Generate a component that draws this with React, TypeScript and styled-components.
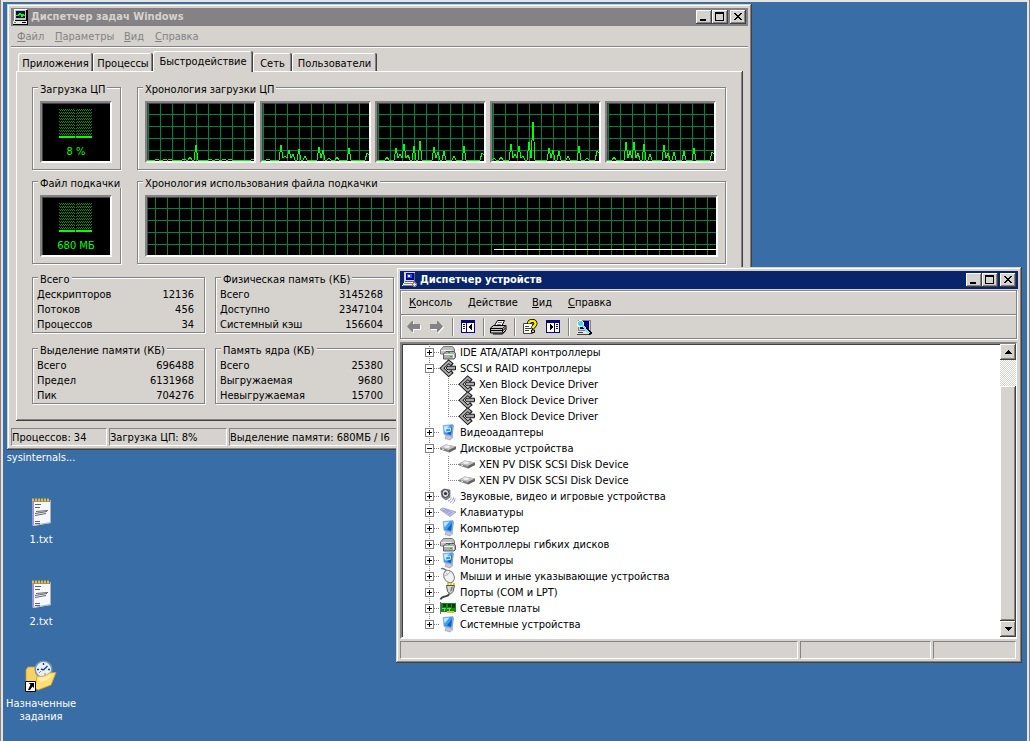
import React, { useState } from "react";
import styled, { createGlobalStyle, css } from "styled-components";

const c = {
  face: "#d6d3ce",
  light: "#ffffff",
  shadow: "#848284",
  dark: "#424142",
  navy: "#08246b",
  desktop: "#396da5",
  green: "#00ff00",
  grid: "#008242",
};

const GlobalStyle = createGlobalStyle`
  * { box-sizing: border-box; }
  body {
    margin: 0;
    font: 11px/13px "DejaVu Sans Condensed", "DejaVu Sans", sans-serif;
    color: #000;
    background: ${c.desktop};
  }
  button { font: inherit; color: inherit; padding: 0; border: 0; background: none; }
  h2, ul, p { margin: 0; padding: 0; list-style: none; }
  svg { display: block; flex: none; }
`;

const raised = css`
  background: ${c.face};
  box-shadow: inset -1px -1px ${c.dark}, inset 1px 1px ${c.light},
    inset -2px -2px ${c.shadow};
`;

const sunken = css`
  border: 2px solid;
  border-color: ${c.shadow} ${c.light} ${c.light} ${c.shadow};
  box-shadow: inset 1px 1px ${c.dark};
`;

/* ---------- desktop ---------- */

const Frame = styled.div`
  display: flex;
  min-height: 100vh;
  border: solid #8c827b;
  border-width: 0 1px;
`;

const Desktop = styled.main`
  position: relative;
  flex: 1;
  overflow: hidden;
  background: ${c.desktop};
  border: solid #e7e3de;
  border-width: 2px 2px 1px;
`;

const IconColumn = styled.div`
  display: flex;
  flex-direction: column;
  width: 76px;
  padding-top: 412px;
`;

const Shortcut = styled.button`
  display: flex;
  flex-direction: column;
  align-items: center;
  gap: 5px;
  height: 82px;
  color: #fff;
`;

const IconSlot = styled.span`
  display: block;
  width: 32px;
  height: 32px;
`;

/* ---------- windows ---------- */

const Window = styled.section<{ $x: number; $y: number; $w: number }>`
  position: absolute;
  left: ${(p) => p.$x}px;
  top: ${(p) => p.$y}px;
  width: ${(p) => p.$w}px;
  display: flex;
  flex-direction: column;
  padding: 4px;
  background: ${c.face};
  box-shadow: inset -1px -1px ${c.dark}, inset 1px 1px ${c.face},
    inset -2px -2px ${c.shadow}, inset 2px 2px ${c.light};
`;

const TitleBar = styled.header<{ $active?: boolean }>`
  display: flex;
  align-items: center;
  height: 18px;
  padding: 0 2px;
  background: ${(p) => (p.$active ? c.navy : c.shadow)};
  color: ${(p) => (p.$active ? c.light : c.face)};
`;

const Title = styled.h2`
  flex: 1;
  padding-left: 2px;
  font: bold 11px/14px "DejaVu Sans Condensed", sans-serif;
  white-space: nowrap;
`;

const CaptionButton = styled.button<{ $gap?: boolean }>`
  ${raised}
  width: 16px;
  height: 14px;
  margin-left: ${(p) => (p.$gap ? 2 : 0)}px;
`;

const MenuBar = styled.nav<{ $dim?: boolean }>`
  display: flex;
  align-items: center;
  height: ${(p) => (p.$dim ? 20 : 23)}px;
  padding-left: ${(p) => (p.$dim ? 6 : 0)}px;
  color: ${(p) => (p.$dim ? c.shadow : "#000")};
`;

const MenuItem = styled.button<{ $w: number }>`
  width: ${(p) => p.$w}px;
  height: 17px;
  text-align: left;
  white-space: nowrap;
`;

const Divider = styled.div`
  height: 2px;
  background: ${c.shadow};
  border-bottom: 1px solid ${c.light};
`;

const StatusBar = styled.footer<{ $columns: string; $inset?: boolean }>`
  display: grid;
  grid-template-columns: ${(p) => p.$columns};
  gap: 2px;
  height: 18px;
  margin-right: ${(p) => (p.$inset ? 2 : 0)}px;
`;

const StatusCell = styled.span`
  border: 1px solid;
  border-color: ${c.shadow} ${c.light} ${c.light} ${c.shadow};
  line-height: 17px;
  white-space: nowrap;
  overflow: hidden;
`;

/* ---------- task manager ---------- */

const TabArea = styled.div`
  padding: 3px 5px 7px;
`;

const TabList = styled.div`
  display: flex;
  align-items: flex-end;
  height: 20px;
  padding-left: 2px;
`;

const Tab = styled.button<{ $w: number; $active?: boolean }>`
  position: relative;
  width: ${(p) => p.$w}px;
  height: ${(p) => (p.$active ? 21 : 18)}px;
  margin-bottom: ${(p) => (p.$active ? -1 : 0)}px;
  padding-top: ${(p) => (p.$active ? 0 : 2)}px;
  z-index: ${(p) => (p.$active ? 1 : 0)};
  background: ${c.face};
  border-radius: 2px 2px 0 0;
  box-shadow: inset -1px 0 ${c.dark}, inset 1px 1px ${c.light}, inset -2px 0 ${c.shadow};
  white-space: nowrap;
`;

const TabPanel = styled.div`
  display: flex;
  flex-direction: column;
  padding: 10px 17px 17px 16px;
  box-shadow: inset -1px -1px ${c.dark}, inset 1px 1px ${c.light},
    inset -2px -2px ${c.shadow};
`;

const Columns = styled.div<{ $below: number }>`
  display: grid;
  grid-template-columns: 89px 1fr;
  gap: 16px;
  margin-bottom: ${(p) => p.$below}px;
`;

const MemoryGrid = styled.div`
  display: grid;
  grid-template-columns: 173px 179px;
  gap: 9px 10px;
`;

const Group = styled.fieldset<{ $table?: boolean }>`
  min-width: 0;
  margin: 0;
  padding: ${(p) => (p.$table ? "3px 10px 0 4px" : "7px 7px 6px")};
  border: 1px solid ${c.shadow};
  box-shadow: 1px 1px ${c.light}, inset 1px 1px ${c.light};
`;

const Legend = styled.legend<{ $table?: boolean }>`
  margin-left: ${(p) => (p.$table ? 1 : -2)}px;
  padding: 0 2px;
  height: 13px;
  line-height: 17px;
  background: ${c.face};
  white-space: nowrap;
`;

const Gauge = styled.div`
  ${sunken}
  display: flex;
  flex-direction: column;
  align-items: center;
  justify-content: space-between;
  width: 72px;
  height: 62px;
  padding: 6px 0 3px;
  background: #000;
  color: ${c.green};
`;

const ChartRow = styled.div<{ $inset?: boolean }>`
  display: flex;
  gap: 4px;
  padding-right: ${(p) => (p.$inset ? 2 : 0)}px;
`;

const Screen = styled.div`
  ${sunken}
  flex: 1;
  height: 62px;
  min-width: 0;
  background: #000;
`;

const Figures = styled.table`
  width: 100%;
  border-spacing: 0;
  th,
  td {
    padding: 0;
    height: 15px;
    font-weight: normal;
    text-align: left;
    white-space: nowrap;
  }
  td {
    text-align: right;
  }
`;

/* ---------- device manager ---------- */

const Bars = styled.div`
  margin: 1px 1px 3px 0;
  border: 1px solid ${c.shadow};
  box-shadow: 1px 1px ${c.light}, inset 1px 1px ${c.light};
`;

const ToolBar = styled.div`
  display: flex;
  align-items: center;
  height: 23px;
  padding-left: 1px;
  box-shadow: inset 0 1px ${c.light};
`;

const ToolButton = styled.button`
  display: flex;
  align-items: center;
  justify-content: center;
  width: 23px;
  height: 23px;
`;

const ToolSeparator = styled.span`
  width: 2px;
  height: 18px;
  margin: 0 2px 0 4px;
  background: ${c.shadow};
  border-right: 1px solid ${c.light};
`;

const MenuRow = styled.div`
  padding-left: 8px;
  border-bottom: 1px solid ${c.shadow};
`;

const TreeBox = styled.div`
  display: flex;
  margin: 0 1px 2px 0;
  border: 2px solid;
  border-color: ${c.shadow} ${c.light} ${c.light} ${c.shadow};
  border-width: 2px 1px 2px 2px;
  box-shadow: inset 1px 1px ${c.dark};
  background: #fff;
`;

const Branch = styled.ul<{ $line: number }>`
  flex: 1;
  background: linear-gradient(${c.shadow} 50%, transparent 50%) ${(p) => p.$line}px 0 / 1px 2px repeat-y;
  > li:last-child {
    background: linear-gradient(#fff, #fff) ${(p) => p.$line}px 100% / 1px 8px no-repeat;
  }
`;

const TreePane = styled.div`
  flex: 1;
  padding-bottom: 5px;
`;

const TreeRow = styled.div<{ $child?: boolean }>`
  display: flex;
  align-items: center;
  height: 16px;
  padding-left: ${(p) => (p.$child ? 46 : 23)}px;
  white-space: nowrap;
`;

const Dots = styled.span<{ $w: number }>`
  width: ${(p) => p.$w}px;
  height: 1px;
  background: linear-gradient(90deg, ${c.shadow} 50%, transparent 50%) 0 0 / 2px 1px;
`;

const Expander = styled.button`
  width: 9px;
  height: 9px;
  background: #fff;
`;

const TreeLabel = styled.span`
  padding-left: 4px;
`;

const ScrollBar = styled.div`
  display: flex;
  flex-direction: column;
  width: 16px;
  background: repeating-conic-gradient(${c.face} 0 25%, #fff 0 50%) 0 0 / 2px 2px;
`;

const ScrollArrow = styled.button`
  ${raised}
  display: flex;
  align-items: center;
  justify-content: center;
  height: 16px;
`;

const ScrollThumb = styled.div`
  ${raised}
  flex: 1;
  margin-top: 26px;
`;

/* ---------- icons ---------- */

const Px = ({ w = 16, h = 16, children }: { w?: number; h?: number; children: React.ReactNode }) => (
  <svg width={w} height={h} viewBox={`0 0 ${w} ${h}`} shapeRendering="crispEdges" aria-hidden="true">
    {children}
  </svg>
);

const TaskManagerIcon = () => (
  <Px>
    <path d="M1 0h13v12h-13z" fill="#fff" />
    <path d="M13 1h2v11H2v-1h11z" fill="#000" />
    <path d="M2 1h11v10H2z" fill="#c6c3c6" />
    <path d="M3 2h9v7H3z" fill="#001040" />
    <path d="M3 6h2V5h1V4h1v1h1v2h1V5h1v1h2" stroke="#00ff00" fill="none" />
    <path d="M0 12h14v3H0z" fill="#e7e7e7" />
    <path d="M1 13h2v1H1z" fill="#00c000" />
    <path d="M9 13h4v1H9zM14 12h1v3h-1zM0 15h15v1H0z" fill="#000" />
  </Px>
);

const DeviceManagerIcon = () => (
  <Px>
    <path d="M2 0h11v10H2z" fill="#d6d3ce" />
    <path d="M4 1h8v7H4z" fill="#0000a0" />
    <path d="M5 2h5v4H5z" fill="#2058f7" />
    <path d="M6 3h2v2H6z" fill="#fff" />
    <path d="M12 1h1v9H3V9h9z" fill="#63656b" />
    <path d="M2 10h10l2 4H0z" fill="#f7f7f7" />
    <path d="M2 11h9v1H2zM1 13h9v1H1z" fill="#848284" />
    <path d="M11 10h3v1h1v3h-1v1h-3v-1h-1v-3h1z" fill="#848284" />
    <path d="M12 11h1v1h1v1h-1v1h-1v-1h-1v-1h1z" fill="#e7e7e7" />
  </Px>
);

const MinimizeGlyph = () => <Px h={14}><path d="M4 9h6v2H4z" /></Px>;
const MaximizeGlyph = () => <Px h={14}><path fillRule="evenodd" d="M3 2h9v9H3zM4 4v6h7V4z" /></Px>;
const CloseGlyph = () => (
  <Px h={14}>
    <path d="M4 3h2v1h1v1h2V4h1V3h2v1h-1v1h-1v1H9v1h1v1h1v1h1v1h-2V9H9V8H7v1H6v1H4V9h1V8h1V7h1V6H6V5H5V4H4z" />
  </Px>
);

const ArrowIcon = ({ right }: { right?: boolean }) => {
  const shape = right ? "M0 4h7V1h1l5 5.500-5 5.500H7V9H0z" : "M13 4H6V1H5L0 6.500 5 12h1V9h7z";
  return (
    <svg width="14" height="13" viewBox="0 0 14 13" overflow="visible" aria-hidden="true">
      <path d={shape} fill="#fff" transform="translate(1 1)" />
      <path d={shape} fill="#848284" />
    </svg>
  );
};

const PaneIcon = ({ right }: { right?: boolean }) => (
  <Px w={14} h={13}>
    <path d="M0 0h14v13H0z" fill="#08087b" />
    <path d={right ? "M1 3h7v9H1zM9 3h4v9H9z" : "M1 3h4v9H1zM6 3h7v9H6z"} fill="#fff" />
    <path d={right ? "M10 4h2v1h-2zM10 6h2v1h-2zM10 8h2v1h-2z" : "M2 4h2v1H2zM2 6h2v1H2zM2 8h2v1H2z"} fill="#08087b" />
    <path d={right ? "M4 4h1v1h1v1h1v2H6v1H5v1H4z" : "M11 4h-1v1H9v1H8v2h1v1h1v1h1z"} fill="#000" />
  </Px>
);

const PrinterIcon = () => (
  <svg width="17" height="16" viewBox="0 0 17 16" aria-hidden="true">
    <path d="M4.500 6.500L7.500 1.500h7l-2.500 5z" fill="#fff" stroke="#000" />
    <path d="M8 3.500h4M7 5.500h4" stroke="#848284" />
    <path d="M.5 9l3-2.500h12.500v4.500l-3 3H.5z" fill="#c6c3c6" stroke="#000" />
    <path d="M.5 9.500h12l3.500-3M12.500 9.500v4M1 11.500h11M12.500 12l3-3" fill="none" stroke="#000" />
    <path d="M3 15h9.500l3-3" fill="none" stroke="#000" />
    <path d="M9 10.500h2" stroke="#e0d000" />
  </svg>
);

const HelpIcon = () => (
  <svg width="16" height="16" viewBox="0 0 16 16" aria-hidden="true">
    <path d="M1.500 4.500h9v10h-9z" fill="#fff" stroke="#424142" />
    <path d="M3 7.500h4M3 9.500h6M3 11.500h4" stroke="#424142" />
    <path d="M7 5C7 1 13.500 1 13.500 4.500 13.500 7 11 6.500 11 9.500" fill="none" stroke="#000" strokeWidth="4" />
    <path d="M7 4.500C7 1 13.500 1 13.500 4.500 13.500 7 11 6.500 11 9" fill="none" stroke="#ffef00" strokeWidth="2.400" />
    <path d="M9.500 11h3v2.500h-3z" fill="#ffef00" stroke="#000" />
  </svg>
);

const ScanIcon = () => (
  <Px>
    <path d="M2 1h12v10H2z" fill="#d6d3ce" stroke="#848284" />
    <path d="M4 2h9v8H4z" fill="#000090" />
    <path d="M1 12h13v3H1z" fill="#e7e3de" />
    <path d="M14 12h1v4H1v-1h13zM2 13h5v1H2z" fill="#424142" />
    <circle cx="4.500" cy="4.500" r="3" fill="#4ad6e7" stroke="#fff" />
    <path d="M7 6l8 9" stroke="#000" strokeWidth="3" />
    <path d="M6 6l7 8" stroke="#7be7f7" strokeWidth="2" />
  </Px>
);

const ControllerIcon = () => (
  <svg width="16" height="16" viewBox="0 0 16 16" aria-hidden="true">
    <path d="M.5 6L3.500 2.500h9L14.500 5v4l-3 1H.5z" fill="#c0c0c0" stroke="#7b7b7b" />
    <path d="M1 6.500h10.500V10" fill="none" stroke="#efefef" />
    <path d="M3.500 10l2.500-2.500h8L15.500 9.500v4L14 15H3.500z" fill="#adadad" stroke="#5a5a5a" />
    <path d="M4 10.500h9.500V14" fill="none" stroke="#efefef" />
    <path d="M8 8h2v1H8zM10 12h2v1h-2z" fill="#10b020" />
  </svg>
);

const ScsiIcon = () => (
  <svg width="16" height="16" viewBox="0 0 16 16" overflow="visible" aria-hidden="true">
    <path d="M12.500 5L8.700 1.800 2 8.200l6.700 6.400L12.500 11.500" fill="none" stroke="#181818" strokeWidth="3.800" />
    <path d="M11.500 4.200L8.700 1.800 2 8.200l6.700 6.400 2.800-2.400" fill="none" stroke="#adadad" strokeWidth="1.900" />
    <path d="M6.500 7.200l1.500-1h7.500v3.600H8l-1.500-1z" fill="#a5a5a5" stroke="#181818" />
  </svg>
);

const MonitorIcon = ({ card }: { card?: boolean }) => (
  <svg width="16" height="16" viewBox="0 0 16 16" overflow="visible" aria-hidden="true">
    <path d="M6 11h5l2 2.500-3 2.500-5-1.500z" fill="#c6c6d6" stroke="#9494ad" strokeWidth=".6" />
    <path d="M12.500 1l1.500.5-1.500 11-2 .5z" fill="#9c9cb5" />
    <path d="M3 1.500L13 .5l-1.500 11.500L4 10.500z" fill="#3c9cef" stroke="#94add6" strokeWidth=".7" />
    <path d="M3.600 2.200l6-.6-5 6z" fill="#b5e7ff" />
    <path d="M7 9.500L12 3l-1 8z" fill="#1060ce" />
    {card && <path d="M5 4.500l5.500-.5-.3 3.500-4.700.5z" fill="none" stroke="#d6efff" />}
  </svg>
);

const DiskIcon = () => (
  <svg width="16" height="16" viewBox="0 0 16 16" aria-hidden="true">
    <path d="M0 7.500L6 4.500l10 2v2.500l-7 3.500L0 9.500z" fill="#848484" />
    <path d="M0 7.500L6 4.500l10 2-7 3.500z" fill="#c2c2c2" />
    <ellipse cx="7" cy="6.800" rx="3" ry="1.300" fill="#efefef" />
    <path d="M9 10l7-3.500v2.500l-7 3.500z" fill="#636363" />
    <path d="M2 9l2 .5" stroke="#dff5df" />
  </svg>
);

const SoundIcon = () => (
  <svg width="16" height="16" viewBox="0 0 16 16" aria-hidden="true">
    <path d="M1 3l3-2 6 1v7l-4 3-4-3z" fill="#8c8c94" stroke="#5a5a63" strokeWidth=".7" />
    <ellipse cx="5.500" cy="5.500" rx="3.500" ry="4" fill="#d6d6de" stroke="#42424a" />
    <circle cx="5.500" cy="5.500" r="1.600" fill="#31313a" />
    <path d="M8 13c2-.5 3-2 3.200-3.500M10 14.500c2-1 3.500-3 3.500-5M12.500 15.500c1.500-1 2.500-3 2.500-5" fill="none" stroke="#8c94e7" />
  </svg>
);

const KeyboardIcon = () => (
  <svg width="16" height="16" viewBox="0 0 16 16" aria-hidden="true">
    <path d="M0 5.500L3 4l13 4-6 4.500z" fill="#c6c6f0" stroke="#8484c6" strokeWidth=".7" />
    <path d="M2.500 6l8 4.500M4.500 5.300l8 3.700M6 9l3-3M9 10.500l3-3M3.500 7.500l3-2.500" stroke="#9494d0" strokeWidth=".8" />
  </svg>
);

const MouseIcon = () => (
  <svg width="16" height="16" viewBox="0 0 16 16" overflow="visible" aria-hidden="true">
    <path d="M1 1c3-2 4 2 6 1" fill="none" stroke="#737373" strokeWidth="1.400" />
    <ellipse cx="9" cy="8.500" rx="5" ry="6.500" transform="rotate(-28 9 8.500)" fill="#f2f2f2" stroke="#848484" />
    <path d="M4.500 7.500C6 8 9.500 6 10 3M6 4.500l2 2.500" fill="none" stroke="#9c9c9c" strokeWidth=".8" />
  </svg>
);

const PortIcon = () => (
  <svg width="16" height="16" viewBox="0 0 16 16" overflow="visible" aria-hidden="true">
    <path d="M9 9.500c0 4.500-7 1-8.500 6" fill="none" stroke="#424242" strokeWidth="1.800" />
    <path d="M6.500 1.500h8L13 7.500 10.500 10 7.500 7.500z" fill="#d6d6d6" stroke="#525252" />
    <path d="M11 3l2-.5-1 4-2 1.500z" fill="#848484" />
    <path d="M7 0h8" stroke="#e7ce00" strokeWidth="2" strokeDasharray="2 1" />
  </svg>
);

const NetworkIcon = () => (
  <Px>
    <path d="M1 3h15v9H1z" fill="#108a18" />
    <path d="M0 2h1v12H0z" fill="#6b6b6b" />
    <path d="M3 4h3v3H3zM8 4h3v3H8zM12 4h3v4h-3z" fill="#003c08" />
    <path d="M2 8h4v1H2zM7 8h4v1H7zM4 9h1v2H4zM9 9h1v2H9z" fill="#63d66b" />
    <path d="M7 11h7v2H7z" fill="#d6c631" />
  </Px>
);

const NotepadIcon = () => (
  <svg width="32" height="32" viewBox="0 0 32 32" aria-hidden="true">
    <path d="M7 4h18l1 23-18 3z" fill="#f4f8fa" />
    <path d="M7.500 4v25.500M8.500 4v25" stroke="#9c94d6" />
    <path d="M25.500 4v22.500l-17 3" fill="none" stroke="#a5b5bd" />
    <path d="M7 5h18" stroke="#8c7394" strokeWidth="2" />
    <path d="M7 4h18" stroke="#e7bd29" strokeWidth="3" strokeDasharray="2 1" />
    <path d="M10 8.500h6M10 11.500h5M11 15.500l12-1M10 17.500l12-2M10 19.500l11-2M10 25.500h5M10 27.500h5" stroke="#63636b" />
  </svg>
);

const ScheduledIcon = () => (
  <svg width="32" height="32" viewBox="0 0 32 32" aria-hidden="true">
    <path d="M1 10l2-3h7l2 3h12v14L14 29 1 27z" fill="#f7d363" stroke="#d69c29" strokeWidth=".8" />
    <circle cx="18.500" cy="9.500" r="8.300" fill="#e4f2fb" stroke="#7d95ad" strokeWidth="1.600" />
    <path d="M18.500 3v2M12 9.500h2M23 9.500h2M18.500 10l4-4M18.500 10l-2.500-1" stroke="#294263" strokeWidth="1.400" />
    <path d="M14 13l2-2M19 14h2" stroke="#e76339" />
    <path d="M10 28L12 16c5 1 9 0 12-3l7-.5L26 25l-13 5z" fill="#ffdf73" stroke="#d69c29" strokeWidth=".8" />
    <path d="M13 17c6 1 10 0 14-3-2 5-6 7-12 8" fill="#fff0b0" />
    <path d="M.5 21.500h10v10H.5z" fill="#fff" stroke="#000" />
    <path d="M4 23h5v5L7.500 26.500 5 30H3l2.500-5.200z" fill="#000" />
  </svg>
);

/* ---------- pieces ---------- */

const Caption = ({ title, icon, active }: { title: string; icon: React.ReactNode; active?: boolean }) => (
  <TitleBar $active={active}>
    {icon}
    <Title>{title}</Title>
    <CaptionButton aria-label="Свернуть"><MinimizeGlyph /></CaptionButton>
    <CaptionButton aria-label="Развернуть"><MaximizeGlyph /></CaptionButton>
    <CaptionButton aria-label="Закрыть" $gap><CloseGlyph /></CaptionButton>
  </TitleBar>
);

const Menu = ({ items, dim }: { items: [string, number][]; dim?: boolean }) => (
  <MenuBar $dim={dim}>
    {items.map(([text, w]) => (
      <MenuItem key={text} $w={w}>
        <u>{text[0]}</u>
        {text.slice(1)}
      </MenuItem>
    ))}
  </MenuBar>
);

const Meter = ({ id, value }: { id: string; value: string }) => (
  <Gauge>
    <Px w={34} h={29}>
      <defs>
        <pattern id={id} width="2" height="3" patternUnits="userSpaceOnUse">
          <path d="M0 0h1v1H0zM1 1h1v1H1z" fill="#009a00" />
        </pattern>
      </defs>
      <path d="M0 0h16v27H0zM17 0h16v27H17z" fill={`url(#${id})`} />
      <path d="M0 27h16v2H0zM17 27h16v2H17z" fill={c.green} />
    </Px>
    <span>{value}</span>
  </Gauge>
);

type Peak = [x: number, height: number];

const BASE = 57;

const trace = (peaks: Peak[]) => {
  const points: string[] = [`0,${BASE}`];
  let last = 0;
  peaks.forEach(([x, h], i) => {
    if (x - 2 > last) points.push(`${x - 2},${BASE}`);
    points.push(`${x},${BASE - h}`);
    const next = peaks[i + 1];
    last = x + 2;
    if (x < 104) points.push(`${last},${next && next[0] - x <= 4 ? BASE - 2 : BASE}`);
    else points.push(`${last},${BASE - h + 2}`);
  });
  return points.join(" ");
};

const Chart = ({ id, x, y, children }: { id: string; x: number; y: number; children: React.ReactNode }) => (
  <Screen>
    <svg width="100%" height="58" shapeRendering="crispEdges" aria-hidden="true">
      <defs>
        <pattern id={id} x={x} y={y} width="12" height="12" patternUnits="userSpaceOnUse">
          <path d="M0 0h12v1H1v11H0z" fill={c.grid} />
        </pattern>
      </defs>
      <rect width="100%" height="58" fill={`url(#${id})`} />
      {children}
    </svg>
  </Screen>
);

const cpuHistory: Peak[][] = [
  [[10, 1], [18, 1], [23, 1], [37, 1], [43, 3], [49, 15], [63, 1], [70, 1], [77, 1], [83, 1], [106, 1]],
  [[6, 1], [19, 15], [23, 4], [27, 10], [31, 6], [37, 11], [43, 4], [57, 13], [61, 10], [67, 2], [75, 3], [87, 12], [105, 7]],
  [[10, 3], [19, 12], [23, 6], [27, 16], [31, 5], [37, 14], [43, 19], [57, 13], [61, 8], [67, 9], [77, 4], [87, 14], [105, 7]],
  [[2, 2], [9, 3], [19, 16], [23, 6], [27, 14], [31, 4], [37, 18], [41, 38], [57, 12], [61, 10], [67, 9], [76, 4], [87, 14], [95, 2], [105, 9]],
  [[7, 3], [19, 18], [23, 9], [27, 18], [31, 7], [37, 16], [43, 6], [57, 15], [61, 7], [67, 8], [77, 9], [87, 12], [105, 8]],
];

const memory: { title: string; rows: [string, string][] }[] = [
  { title: "Всего", rows: [["Дескрипторов", "12136"], ["Потоков", "456"], ["Процессов", "34"]] },
  { title: "Физическая память (КБ)", rows: [["Всего", "3145268"], ["Доступно", "2347104"], ["Системный кэш", "156604"]] },
  { title: "Выделение памяти (КБ)", rows: [["Всего", "696488"], ["Предел", "6131968"], ["Пик", "704276"]] },
  { title: "Память ядра (КБ)", rows: [["Всего", "25380"], ["Выгружаемая", "9680"], ["Невыгружаемая", "15700"]] },
];

const TaskManager = () => (
  <Window $x={4} $y={2} $w={745}>
    <Caption title="Диспетчер задач Windows" icon={<TaskManagerIcon />} />
    <Menu dim items={[["Файл", 38], ["Параметры", 69], ["Вид", 31], ["Справка", 60]]} />
    <Divider />
    <TabArea>
      <TabList role="tablist">
        <Tab role="tab" $w={75}>Приложения</Tab>
        <Tab role="tab" $w={60}>Процессы</Tab>
        <Tab role="tab" $w={100} $active aria-selected>Быстродействие</Tab>
        <Tab role="tab" $w={39}>Сеть</Tab>
        <Tab role="tab" $w={85}>Пользователи</Tab>
      </TabList>
      <TabPanel role="tabpanel">
        <Columns $below={5}>
          <Group>
            <Legend>Загрузка ЦП</Legend>
            <Meter id="cpu" value="8 %" />
          </Group>
          <Group>
            <Legend>Хронология загрузки ЦП</Legend>
            <ChartRow $inset>
              {cpuHistory.map((peaks, i) => (
                <Chart key={i} id={`cpu-grid-${i}`} x={1} y={11}>
                  <polyline points={trace(peaks)} fill="none" stroke={c.green} />
                </Chart>
              ))}
            </ChartRow>
          </Group>
        </Columns>
        <Columns $below={7}>
          <Group>
            <Legend>Файл подкачки</Legend>
            <Meter id="page" value="680 МБ" />
          </Group>
          <Group>
            <Legend>Хронология использования файла подкачки</Legend>
            <ChartRow>
              <Chart id="page-grid" x={8} y={11}>
                <rect x="347" y="52" width="100%" height="1" fill="#e7ffe7" />
              </Chart>
            </ChartRow>
          </Group>
        </Columns>
        <MemoryGrid>
          {memory.map((group) => (
            <Group key={group.title} $table>
              <Legend $table>{group.title}</Legend>
              <Figures>
                <tbody>
                  {group.rows.map(([name, value]) => (
                    <tr key={name}>
                      <th scope="row">{name}</th>
                      <td>{value}</td>
                    </tr>
                  ))}
                </tbody>
              </Figures>
            </Group>
          ))}
        </MemoryGrid>
      </TabPanel>
    </TabArea>
    <StatusBar $columns="96px 118px 1fr">
      <StatusCell>Процессов: 34</StatusCell>
      <StatusCell>Загрузка ЦП: 8%</StatusCell>
      <StatusCell>Выделение памяти: 680МБ / I6</StatusCell>
    </StatusBar>
  </Window>
);

type Device = { name: string; icon: React.ReactNode; children?: string[] };

const devices: Device[] = [
  { name: "IDE ATA/ATAPI контроллеры", icon: <ControllerIcon /> },
  {
    name: "SCSI и RAID контроллеры",
    icon: <ScsiIcon />,
    children: ["Xen Block Device Driver", "Xen Block Device Driver", "Xen Block Device Driver"],
  },
  { name: "Видеоадаптеры", icon: <MonitorIcon card /> },
  {
    name: "Дисковые устройства",
    icon: <DiskIcon />,
    children: ["XEN PV DISK SCSI Disk Device", "XEN PV DISK SCSI Disk Device"],
  },
  { name: "Звуковые, видео и игровые устройства", icon: <SoundIcon /> },
  { name: "Клавиатуры", icon: <KeyboardIcon /> },
  { name: "Компьютер", icon: <MonitorIcon /> },
  { name: "Контроллеры гибких дисков", icon: <ControllerIcon /> },
  { name: "Мониторы", icon: <MonitorIcon card /> },
  { name: "Мыши и иные указывающие устройства", icon: <MouseIcon /> },
  { name: "Порты (COM и LPT)", icon: <PortIcon /> },
  { name: "Сетевые платы", icon: <NetworkIcon /> },
  { name: "Системные устройства", icon: <MonitorIcon /> },
];

const DeviceNode = ({ device }: { device: Device }) => {
  const [open, setOpen] = useState(Boolean(device.children));
  return (
    <li>
      <TreeRow>
        <Expander aria-label={device.name} aria-expanded={open} onClick={() => setOpen(!open)}>
          <Px w={9} h={9}>
            <path fillRule="evenodd" d="M0 0h9v9H0zM1 1v7h7V1z" fill="#848284" />
            <path d={open ? "M2 4h5v1H2z" : "M2 4h2V2h1v2h2v1H5v2H4V5H2z"} />
          </Px>
        </Expander>
        <Dots $w={6} />
        {device.icon}
        <TreeLabel>{device.name}</TreeLabel>
      </TreeRow>
      {open && device.children && (
        <Branch $line={46}>
          {device.children.map((name, i) => (
            <li key={i}>
              <TreeRow $child>
                <Dots $w={11} />
                {device.icon}
                <TreeLabel>{name}</TreeLabel>
              </TreeRow>
            </li>
          ))}
        </Branch>
      )}
    </li>
  );
};

const DeviceManager = () => (
  <Window $x={393} $y={265} $w={626}>
    <Caption title="Диспетчер устройств" icon={<DeviceManagerIcon />} active />
    <Bars>
      <MenuRow>
        <Menu items={[["Консоль", 59], ["Действие", 64], ["Вид", 36], ["Справка", 60]]} />
      </MenuRow>
      <ToolBar role="toolbar">
        <ToolButton aria-label="Назад"><ArrowIcon /></ToolButton>
        <ToolButton aria-label="Вперед"><ArrowIcon right /></ToolButton>
        <ToolSeparator />
        <ToolButton aria-label="Дерево консоли"><PaneIcon /></ToolButton>
        <ToolSeparator />
        <ToolButton aria-label="Печать"><PrinterIcon /></ToolButton>
        <ToolSeparator />
        <ToolButton aria-label="Справка"><HelpIcon /></ToolButton>
        <ToolButton aria-label="Панель действий"><PaneIcon right /></ToolButton>
        <ToolSeparator />
        <ToolButton aria-label="Обновить конфигурацию"><ScanIcon /></ToolButton>
      </ToolBar>
    </Bars>
    <TreeBox>
      <TreePane>
        <Branch $line={27}>
          {devices.map((device) => (
            <DeviceNode key={device.name} device={device} />
          ))}
        </Branch>
      </TreePane>
      <ScrollBar>
        <ScrollArrow aria-label="Вверх"><Px w={7} h={4}><path d="M3 0h1v1h1v1h1v1h1v1H0V3h1V2h1V1h1z" /></Px></ScrollArrow>
        <ScrollThumb />
        <ScrollArrow aria-label="Вниз"><Px w={7} h={4}><path d="M0 0h7v1H6v1H5v1H4v1H3V3H2V2H1V1H0z" /></Px></ScrollArrow>
      </ScrollBar>
    </TreeBox>
    <StatusBar $columns="398px 131px 1fr" $inset>
      <StatusCell />
      <StatusCell />
      <StatusCell />
    </StatusBar>
  </Window>
);

export default function App() {
  return (
    <>
      <GlobalStyle />
      <Frame>
        <Desktop>
          <IconColumn>
            <Shortcut><IconSlot />sysinternals...</Shortcut>
            <Shortcut><NotepadIcon />1.txt</Shortcut>
            <Shortcut><NotepadIcon />2.txt</Shortcut>
            <Shortcut><ScheduledIcon />Назначенные задания</Shortcut>
          </IconColumn>
          <TaskManager />
          <DeviceManager />
        </Desktop>
      </Frame>
    </>
  );
}
